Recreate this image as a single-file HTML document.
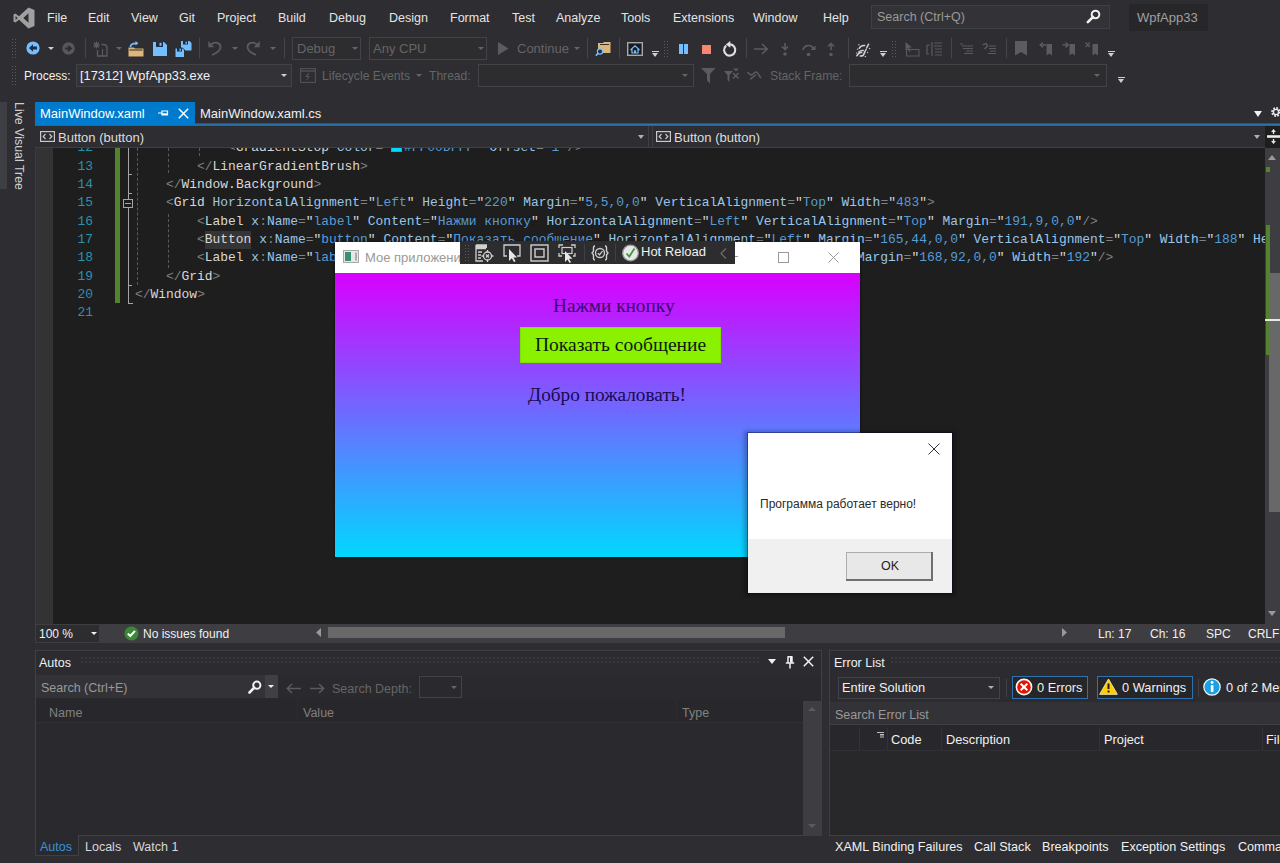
<!DOCTYPE html>
<html><head><meta charset="utf-8">
<style>
*{margin:0;padding:0;box-sizing:border-box}
html,body{width:1280px;height:863px;overflow:hidden;background:#2d2d32;font-family:"Liberation Sans",sans-serif;color:#f1f1f1}
.a{position:absolute}
svg.a{overflow:visible}
.t{position:absolute;white-space:pre;font-size:12px;line-height:14px}
.menu .t{top:11px;color:#e4e4e4;font-size:12.5px}
.dd{position:absolute;width:0;height:0;border-style:solid;border-left:3px solid transparent;border-right:3px solid transparent;border-top:3px solid #d0d0d0;border-bottom:0 solid transparent}
.ddg{border-top-color:#656565}
.sep{position:absolute;width:1px;height:20px;background:#46464a}
.grip{position:absolute;width:5px;background-image:radial-gradient(circle,#5a5a60 0.8px,transparent 1px);background-size:3px 3px}
.cb{position:absolute;border:1px solid #434346;background:#2d2d30}
.code{font-family:"Liberation Mono",monospace;font-size:12.95px;white-space:pre}
.ln{position:absolute;margin-top:2px;white-space:pre;line-height:18px;height:18px;font-family:"Liberation Mono",monospace;font-size:12.95px;color:#dcdcdc}
.num{position:absolute;margin-top:2px;left:53px;width:40px;text-align:right;color:#2b91af;font-family:"Liberation Mono",monospace;font-size:12.95px;line-height:18px}
.p{color:#808080}.e{color:#d8d8d8}.at{color:#9ac6ea}.v{color:#569cd6}.q{color:#d8d8d8}
</style></head><body>

<!-- ============ MENU BAR ============ -->
<svg class="a" style="left:13px;top:7px" width="22" height="22" viewBox="0 0 22 22">
  <path d="M15.5 0.5 L21.5 3 L21.5 19 L15.5 21.5 L6 12.8 L2.4 15.6 L0.5 14.6 L0.5 7.4 L2.4 6.4 L6 9.2 Z M15.5 6.2 L10.3 11 L15.5 15.8 Z M2.6 9 L2.6 13 L4.6 11 Z" fill="#a0a0a0" fill-rule="evenodd"/>
</svg>
<div class="menu">
  <div class="t" style="left:47px">File</div>
  <div class="t" style="left:88px">Edit</div>
  <div class="t" style="left:131px">View</div>
  <div class="t" style="left:179px">Git</div>
  <div class="t" style="left:217px">Project</div>
  <div class="t" style="left:278px">Build</div>
  <div class="t" style="left:329px">Debug</div>
  <div class="t" style="left:389px">Design</div>
  <div class="t" style="left:450px">Format</div>
  <div class="t" style="left:512px">Test</div>
  <div class="t" style="left:556px">Analyze</div>
  <div class="t" style="left:621px">Tools</div>
  <div class="t" style="left:673px">Extensions</div>
  <div class="t" style="left:753px">Window</div>
  <div class="t" style="left:823px">Help</div>
</div>
<div class="a" style="left:871px;top:5px;width:239px;height:24px;background:#333337;border:1px solid #3f3f46"></div>
<div class="t" style="left:877px;top:10px;color:#999;font-size:12.5px">Search (Ctrl+Q)</div>
<svg class="a" style="left:1086px;top:9px" width="15" height="15" viewBox="0 0 15 15">
  <circle cx="9.5" cy="5.5" r="3.8" fill="none" stroke="#f1f1f1" stroke-width="2"/>
  <path d="M7 8 L1.8 13.2" stroke="#f1f1f1" stroke-width="2.6" stroke-linecap="round"/>
</svg>
<div class="a" style="left:1129px;top:4px;width:79px;height:27px;background:#27272a"></div>
<div class="t" style="left:1137px;top:11px;color:#a0a0a0;font-size:13px">WpfApp33</div>

<!-- ============ TOOLBAR 1 ============ -->
<div class="grip" style="left:11px;top:38px;height:22px"></div>
<svg class="a" style="left:26px;top:41px" width="14" height="14" viewBox="0 0 14 14">
  <circle cx="7" cy="7" r="6.6" fill="#75beff"/>
  <path d="M3 7 L7 3.2 L7 5.6 L11 5.6 L11 8.4 L7 8.4 L7 10.8 Z" fill="#1b2e46"/>
</svg>
<div class="dd" style="left:48px;top:47px"></div>
<svg class="a" style="left:62px;top:42px" width="13" height="13" viewBox="0 0 13 13">
  <circle cx="6.5" cy="6.5" r="6.2" fill="#58585b"/>
  <path d="M3 6.5 L8 6.5 M6 3.8 L9 6.5 L6 9.2" fill="none" stroke="#2d2d32" stroke-width="1.8"/>
</svg>
<div class="sep" style="left:85px;top:38px"></div>
<svg class="a" style="left:93px;top:41px" width="16" height="16" viewBox="0 0 16 16">
  <path d="M1 1.5 L6 6.5 M6 1.5 L1 6.5 M3.5 0.5 L3.5 7.5 M0 4 L7 4" stroke="#5c5c5e" stroke-width="1.1"/>
  <path d="M4.5 9 L4.5 15 L14 15 L14 7 C14 4.5 12.5 3.5 10 3.5 L8.5 3.5" fill="none" stroke="#5c5c5e" stroke-width="1.3"/>
  <path d="M9.5 8 L9.5 15" stroke="#5c5c5e" stroke-width="1.1"/>
</svg>
<div class="dd ddg" style="left:116px;top:47px"></div>
<svg class="a" style="left:128px;top:41px" width="17" height="16" viewBox="0 0 17 16">
  <path d="M0.5 6.5 L6 6.5 L7 7.5 L15.5 7.5 L15.5 15.5 L0.5 15.5 Z" fill="#dcb67a"/>
  <path d="M1.5 9 L14.5 9" stroke="#2d2d30" stroke-width="1"/>
  <path d="M2.5 6 C2.5 3 4.5 2.3 8 2.3" fill="none" stroke="#75beff" stroke-width="1.7"/>
  <path d="M7.5 0 L10.5 2.3 L7.5 4.6 Z" fill="#75beff"/>
</svg>
<svg class="a" style="left:153px;top:42px" width="14" height="14" viewBox="0 0 14 14">
  <path d="M0 0 L11 0 L14 3 L14 14 L0 14 Z" fill="#75beff"/>
  <rect x="3" y="0" width="7" height="5" fill="#1b2e46"/>
  <rect x="6.5" y="0.8" width="2" height="3" fill="#75beff"/>
</svg>
<svg class="a" style="left:175px;top:41px" width="17" height="17" viewBox="0 0 17 17">
  <path d="M6 0 L14.5 0 L16.5 2 L16.5 9.5 L6 9.5 Z" fill="#75beff"/>
  <rect x="8" y="0" width="5" height="3.5" fill="#1b2e46"/><rect x="10.5" y="0.6" width="1.4" height="2.2" fill="#75beff"/>
  <path d="M0 7 L7.5 7 L9.5 9 L9.5 16.5 L0 16.5 Z" fill="#75beff" stroke="#2d2d30" stroke-width="1"/>
  <rect x="2" y="7" width="5" height="3.5" fill="#1b2e46"/><rect x="4.5" y="7.6" width="1.4" height="2.2" fill="#75beff"/>
</svg>
<div class="sep" style="left:199px;top:38px"></div>
<svg class="a" style="left:208px;top:40px" width="14" height="16" viewBox="0 0 14 16">
  <path d="M3 4.5 C7 1 12.5 3 12.5 7 C12.5 10 10 12.5 4 15" fill="none" stroke="#5c5c5e" stroke-width="1.8"/>
  <path d="M0.3 1 L0.3 7.3 L6.3 7.3 Z" fill="#5c5c5e"/>
</svg>
<div class="dd ddg" style="left:232px;top:47px"></div>
<svg class="a" style="left:246px;top:40px" width="14" height="16" viewBox="0 0 14 16">
  <path d="M11 4.5 C7 1 1.5 3 1.5 7 C1.5 10 4 12.5 10 15" fill="none" stroke="#5c5c5e" stroke-width="1.8"/>
  <path d="M13.7 1 L13.7 7.3 L7.7 7.3 Z" fill="#5c5c5e"/>
</svg>
<div class="dd ddg" style="left:270px;top:47px"></div>
<div class="sep" style="left:284px;top:38px"></div>
<div class="cb" style="left:292px;top:37px;width:69px;height:23px"></div>
<div class="t" style="left:297px;top:42px;color:#656565;font-size:13px">Debug</div>
<div class="dd ddg" style="left:352px;top:47px"></div>
<div class="cb" style="left:369px;top:37px;width:118px;height:23px"></div>
<div class="t" style="left:373px;top:42px;color:#656565;font-size:13px">Any CPU</div>
<div class="dd ddg" style="left:478px;top:47px"></div>
<svg class="a" style="left:498px;top:42px" width="11" height="13" viewBox="0 0 11 13"><path d="M0 0 L10.5 6.5 L0 13 Z" fill="#5c5c5e"/></svg>
<div class="t" style="left:517px;top:42px;color:#656565;font-size:13px">Continue</div>
<div class="dd ddg" style="left:574px;top:47px"></div>
<div class="sep" style="left:587px;top:38px"></div>
<svg class="a" style="left:595px;top:41px" width="17" height="16" viewBox="0 0 17 16">
  <path d="M3 2 L8 2 L9 1 L15.5 1 L15.5 12 L3 12 Z" fill="#dcb67a"/>
  <path d="M5 3.5 L14 3.5" stroke="#3a3226" stroke-width="1"/>
  <circle cx="5" cy="10.5" r="2.6" fill="#1b2e46" stroke="#75beff" stroke-width="1.2"/>
  <path d="M3.2 12.3 L0.8 14.7" stroke="#75beff" stroke-width="1.8"/>
</svg>
<div class="sep" style="left:619px;top:38px"></div>
<svg class="a" style="left:627px;top:42px" width="16" height="14" viewBox="0 0 16 14">
  <rect x="0.7" y="0.7" width="14.6" height="12.6" fill="#1b1b1e" stroke="#a8a8a8" stroke-width="1.4"/>
  <path d="M3.5 8 L8 3.8 L12.5 8 M5 7 L5 11 L11 11 L11 7" fill="none" stroke="#75beff" stroke-width="1.2"/>
  <rect x="7" y="8.3" width="2" height="2.7" fill="#75beff"/>
</svg>
<div class="a" style="left:652px;top:51px;width:7px;height:1px;background:#d0d0d0"></div>
<div class="dd" style="left:652px;top:53px;border-width:4px 3.5px 0 3.5px"></div>
<div class="grip" style="left:663px;top:40px;height:18px"></div>
<div class="a" style="left:679px;top:44px;width:3.5px;height:9.5px;background:#75beff"></div>
<div class="a" style="left:684px;top:44px;width:3.5px;height:9.5px;background:#75beff"></div>
<div class="a" style="left:702px;top:45px;width:9px;height:8.6px;background:#f48771"></div>
<svg class="a" style="left:722px;top:41px" width="15" height="16" viewBox="0 0 15 16">
  <path d="M4.2 4.6 A5.6 5.6 0 1 0 8 3.4" fill="none" stroke="#e0e0e0" stroke-width="2.1"/>
  <path d="M8.3 0 L8.3 6.8 L3.8 3.4 Z" fill="#e0e0e0"/>
</svg>
<div class="sep" style="left:746px;top:38px"></div>
<svg class="a" style="left:754px;top:43px" width="15" height="12" viewBox="0 0 15 12">
  <path d="M0 6 L13 6 M8 1 L13.2 6 L8 11" fill="none" stroke="#5c5c5e" stroke-width="1.6"/>
</svg>
<svg class="a" style="left:780px;top:43px" width="10" height="14" viewBox="0 0 10 14">
  <path d="M5 0 L5 6 M2 3.5 L5 6.5 L8 3.5" fill="none" stroke="#5c5c5e" stroke-width="1.6"/><circle cx="5" cy="11" r="1.8" fill="#5c5c5e"/>
</svg>
<svg class="a" style="left:801px;top:43px" width="15" height="14" viewBox="0 0 15 14">
  <path d="M2 7 C3 2 10 1 12 5" fill="none" stroke="#5c5c5e" stroke-width="1.7"/><path d="M14.5 2.5 L14.5 7 L9.5 7 Z" fill="#5c5c5e"/><circle cx="7.5" cy="11.5" r="1.8" fill="#5c5c5e"/>
</svg>
<svg class="a" style="left:826px;top:43px" width="10" height="14" viewBox="0 0 10 14">
  <path d="M5 7 L5 1 M2 3.5 L5 0.5 L8 3.5" fill="none" stroke="#5c5c5e" stroke-width="1.6"/><circle cx="5" cy="11.5" r="1.8" fill="#5c5c5e"/>
</svg>
<div class="sep" style="left:848px;top:38px"></div>
<svg class="a" style="left:856px;top:42px" width="15" height="15" viewBox="0 0 15 15">
  <g fill="none" stroke="#d4d4d4" stroke-width="1.5" stroke-linecap="round">
    <path d="M3.2 6.3 C4.5 4 6.5 3.3 8.7 3.5"/>
    <path d="M12.6 2.2 L10.6 6"/>
    <path d="M2.8 10 C4 8.8 5.5 8.2 7.2 8.5"/>
    <path d="M10 7.5 L8.4 10.8"/>
    <path d="M0.8 13.8 C2 11.8 3.8 10.3 5.6 10.6"/>
    <path d="M4.2 14 C6 14.3 7.8 13.2 8.4 11"/>
  </g>
  <g fill="#bdbdbd"><circle cx="2.8" cy="2.8" r="0.8"/><circle cx="1.5" cy="7.3" r="0.7"/><circle cx="0.8" cy="11" r="0.7"/><circle cx="13.6" cy="6.5" r="0.8"/><circle cx="11.6" cy="10.5" r="0.7"/><circle cx="9.4" cy="14.5" r="0.8"/></g>
</svg>
<div class="a" style="left:880px;top:51px;width:7px;height:1px;background:#d0d0d0"></div>
<div class="dd" style="left:880px;top:53px;border-width:4px 3.5px 0 3.5px"></div>
<div class="grip" style="left:891px;top:40px;height:18px"></div>
<svg class="a" style="left:905px;top:42px" width="15" height="15" viewBox="0 0 15 15">
  <path d="M0.5 0 L0.5 8 L2.5 6 L4.5 10 L5.5 9.5 L4 5.5 L7 5.5 Z" fill="#5c5c5e"/>
  <rect x="1.5" y="7.5" width="12.5" height="6.5" fill="none" stroke="#5c5c5e" stroke-width="1"/>
</svg>
<svg class="a" style="left:926px;top:41px" width="17" height="16" viewBox="0 0 17 16">
  <path d="M1 4 L1 13 L3 13 M1 4 L4 4" fill="none" stroke="#5c5c5e" stroke-width="1.2"/>
  <path d="M6 1 L6 15 M8 2 L16 2 M8 5 L16 5 M9 8 L16 8 M9 11 L16 11 M9 14 L16 14" stroke="#5c5c5e" stroke-width="1.2"/>
</svg>
<div class="sep" style="left:951px;top:38px"></div>
<svg class="a" style="left:960px;top:43px" width="14" height="12" viewBox="0 0 14 12">
  <path d="M0 1 L3 1 M2 3 L13 3 M3 5.5 L13 5.5 M6 8 L13 8 M4 10.5 L13 10.5" stroke="#5c5c5e" stroke-width="1.2"/>
</svg>
<svg class="a" style="left:982px;top:43px" width="15" height="12" viewBox="0 0 15 12">
  <path d="M1 2 C3 -0.5 6 1 5 3.5 L2.5 6" fill="none" stroke="#5c5c5e" stroke-width="1.5"/>
  <path d="M7 3 L14 3 M7 5.5 L14 5.5 M8 8 L14 8 M6 10.5 L14 10.5" stroke="#5c5c5e" stroke-width="1.2"/>
</svg>
<div class="sep" style="left:1006px;top:38px"></div>
<svg class="a" style="left:1015px;top:41px" width="12" height="15" viewBox="0 0 12 15"><path d="M0 0 L12 0 L12 14.5 L6 11 L0 14.5 Z" fill="#5c5c5e"/></svg>
<svg class="a" style="left:1039px;top:42px" width="14" height="14" viewBox="0 0 14 14">
  <path d="M7 3 L1.5 3 M4 0.5 L1.2 3 L4 5.5" fill="none" stroke="#5c5c5e" stroke-width="1.4"/>
  <path d="M7.5 2 L13 2 L13 13.5 L10.2 11.5 L7.5 13.5 Z" fill="#5c5c5e"/>
</svg>
<svg class="a" style="left:1062px;top:42px" width="14" height="14" viewBox="0 0 14 14">
  <path d="M0.5 3 L6 3 M3.5 0.5 L6.3 3 L3.5 5.5" fill="none" stroke="#5c5c5e" stroke-width="1.4"/>
  <path d="M7.5 2 L13 2 L13 13.5 L10.2 11.5 L7.5 13.5 Z" fill="#5c5c5e"/>
</svg>
<svg class="a" style="left:1085px;top:42px" width="14" height="14" viewBox="0 0 14 14">
  <path d="M0.5 0.5 L5 5 M5 0.5 L0.5 5" stroke="#5c5c5e" stroke-width="1.3"/>
  <path d="M7.5 2 L13 2 L13 13.5 L10.2 11.5 L7.5 13.5 Z" fill="#5c5c5e"/>
</svg>
<div class="a" style="left:1108px;top:51px;width:7px;height:1px;background:#d0d0d0"></div>
<div class="dd" style="left:1108px;top:53px;border-width:4px 3.5px 0 3.5px"></div>

<!-- ============ TOOLBAR 2 ============ -->
<div class="grip" style="left:11px;top:65px;height:22px"></div>
<div class="t" style="left:24px;top:69px;font-size:12px;color:#f1f1f1">Process:</div>
<div class="cb" style="left:76px;top:64px;width:216px;height:23px;background:#333337"></div>
<div class="t" style="left:80px;top:69px;font-size:12.8px;color:#f1f1f1">[17312] WpfApp33.exe</div>
<div class="dd" style="left:281px;top:74px"></div>
<svg class="a" style="left:300px;top:68px" width="16" height="15" viewBox="0 0 16 15">
  <rect x="0.6" y="0.6" width="14.8" height="13.8" fill="none" stroke="#505052" stroke-width="1.2"/>
  <path d="M0.6 3 L15.4 3" stroke="#505052" stroke-width="1.5"/>
  <path d="M9 5 L6 8.5 L9 8.5 L6.5 12" fill="none" stroke="#505052" stroke-width="1.2"/>
</svg>
<div class="t" style="left:322px;top:69px;color:#656565;font-size:12.2px">Lifecycle Events</div>
<div class="dd ddg" style="left:416px;top:74px"></div>
<div class="t" style="left:429px;top:69px;color:#656565;font-size:12.1px">Thread:</div>
<div class="cb" style="left:478px;top:64px;width:216px;height:23px"></div>
<div class="dd ddg" style="left:682px;top:74px"></div>
<svg class="a" style="left:701px;top:68px" width="15" height="16" viewBox="0 0 15 16"><path d="M0 0 L14.5 0 L9 6 L9 15.5 L6 12.5 L6 6 Z" fill="#5c5c5e"/></svg>
<svg class="a" style="left:724px;top:68px" width="16" height="16" viewBox="0 0 16 16">
  <path d="M0 3 L9 3 L5.5 7 L5.5 14 L3.5 12 L3.5 7 Z" fill="#5c5c5e"/>
  <path d="M9 0.5 L15 0.5 L12 3.5 Z" fill="#5c5c5e"/><path d="M9 5 L14.5 10.5 M14.5 5 L9 10.5" stroke="#5c5c5e" stroke-width="1.5"/>
</svg>
<svg class="a" style="left:747px;top:70px" width="15" height="11" viewBox="0 0 15 11">
  <path d="M0.5 2 L3 4.5 C5 6.5 7 2 9 2 C11 2 12 6 14 8 M3 9 C5 9 7 5 9 5" fill="none" stroke="#5c5c5e" stroke-width="1.6"/>
</svg>
<div class="t" style="left:770px;top:69px;color:#656565;font-size:12.2px">Stack Frame:</div>
<div class="cb" style="left:849px;top:64px;width:258px;height:23px"></div>
<div class="dd ddg" style="left:1094px;top:74px"></div>
<div class="a" style="left:1118px;top:77px;width:7px;height:1px;background:#d0d0d0"></div>
<div class="dd" style="left:1118px;top:79px;border-width:4px 3.5px 0 3.5px"></div>

<!-- ============ DOC TABS ============ -->
<div class="a" style="left:0;top:102px;width:7px;height:87px;background:#3e3e45"></div>
<div class="t" style="left:24.5px;top:102px;font-size:12.4px;line-height:12px;color:#d0d0d0;transform-origin:0 0;transform:rotate(90deg)">Live Visual Tree</div>
<div class="a" style="left:35px;top:102px;width:160px;height:22px;background:#007acc"></div>
<div class="t" style="left:40px;top:107px;font-size:13px;color:#fff">MainWindow.xaml</div>
<svg class="a" style="left:158px;top:108px" width="10" height="10" viewBox="0 0 10 10">
  <path d="M0 5 L4 5 M4 2.5 L4 7.5 M4 3 L9.5 3 L9.5 7 L4 7" fill="none" stroke="#fff" stroke-width="1.2"/>
  <rect x="4" y="5.3" width="5.5" height="1.7" fill="#fff"/>
</svg>
<svg class="a" style="left:178px;top:108px" width="11" height="11" viewBox="0 0 11 11">
  <path d="M0.8 0.8 L10.2 10.2 M10.2 0.8 L0.8 10.2" stroke="#fff" stroke-width="1.5"/>
</svg>
<div class="t" style="left:200px;top:107px;font-size:13px;color:#f1f1f1">MainWindow.xaml.cs</div>
<div class="a" style="left:35px;top:123px;width:1245px;height:3px;background:linear-gradient(#1c4466,#2a74ac 45%,#2a74ac 75%,#224f72)"></div>
<div class="a" style="left:35px;top:123px;width:160px;height:2px;background:#007acc"></div>
<div class="dd" style="left:1254px;top:111px;border-width:6px 4.5px 0 4.5px;border-top-color:#f1f1f1"></div>
<svg class="a" style="left:1270px;top:106px" width="12" height="12" viewBox="0 0 12 12">
  <circle cx="6" cy="6" r="3.6" fill="none" stroke="#e8e8e8" stroke-width="2.6" stroke-dasharray="1.6 1.2"/>
  <circle cx="6" cy="6" r="2.6" fill="none" stroke="#e8e8e8" stroke-width="1.4"/>
</svg>

<!-- ============ NAV BAR ============ -->
<div class="a" style="left:35px;top:126px;width:1230px;height:22px;background:#2e2e32;border-bottom:1px solid #3f3f46"></div>
<div class="a" style="left:648px;top:126px;width:1px;height:21px;background:#3f3f46"></div>
<div class="a" style="left:652px;top:126px;width:1px;height:21px;background:#3f3f46"></div>
<svg class="a" style="left:40px;top:131px" width="15" height="11" viewBox="0 0 15 11">
  <rect x="0.6" y="0.6" width="13.8" height="9.8" fill="none" stroke="#c8c8c8" stroke-width="1.2"/>
  <path d="M5.5 3 L3.2 5.5 L5.5 8 M9.5 3 L11.8 5.5 L9.5 8" fill="none" stroke="#c8c8c8" stroke-width="1.2"/>
</svg>
<div class="t" style="left:58px;top:131px;font-size:13px;color:#dcdcdc">Button (button)</div>
<div class="dd" style="left:638px;top:135px;border-width:4px 3px 0 3px;border-top-color:#b0b0b0"></div>
<svg class="a" style="left:656px;top:131px" width="15" height="11" viewBox="0 0 15 11">
  <rect x="0.6" y="0.6" width="13.8" height="9.8" fill="none" stroke="#c8c8c8" stroke-width="1.2"/>
  <path d="M5.5 3 L3.2 5.5 L5.5 8 M9.5 3 L11.8 5.5 L9.5 8" fill="none" stroke="#c8c8c8" stroke-width="1.2"/>
</svg>
<div class="t" style="left:674px;top:131px;font-size:13px;color:#dcdcdc">Button (button)</div>
<div class="dd" style="left:1254px;top:135px;border-width:4px 3px 0 3px;border-top-color:#b0b0b0"></div>
<div class="a" style="left:1265px;top:126px;width:15px;height:22px;background:#1e1e1e"></div>
<svg class="a" style="left:1267px;top:129px" width="13" height="15" viewBox="0 0 13 15">
  <path d="M0 7.5 L13 7.5" stroke="#e8e8e8" stroke-width="2.6"/>
  <path d="M6.5 0.5 L6.5 5 M6.5 10 L6.5 14.5" stroke="#e8e8e8" stroke-width="1.3"/>
  <path d="M4 3 L6.5 0.3 L9 3 Z M4 12 L6.5 14.7 L9 12 Z" fill="#e8e8e8"/>
</svg>

<!-- ============ EDITOR ============ -->
<div class="a" style="left:35px;top:148px;width:1230px;height:476px;background:#1e1e1e;overflow:hidden">
</div>
<div class="a" style="left:35px;top:148px;width:18px;height:476px;background:#333334"></div>
<div class="a" style="left:35px;top:148px;width:1px;height:476px;background:#3c3c40"></div>
<!-- line numbers -->
<div class="a" style="left:0;top:148px;width:1265px;height:476px;overflow:hidden">
 <div class="a" style="left:0;top:-148px;width:1265px;height:700px">
  <div class="num" style="top:137px">12</div>
  <div class="num" style="top:156px">13</div>
  <div class="num" style="top:174px">14</div>
  <div class="num" style="top:192px">15</div>
  <div class="num" style="top:211px">16</div>
  <div class="num" style="top:229px">17</div>
  <div class="num" style="top:247px">18</div>
  <div class="num" style="top:266px">19</div>
  <div class="num" style="top:284px">20</div>
  <div class="num" style="top:302px">21</div>
  <!-- change margin -->
  <div class="a" style="left:115px;top:148px;width:5px;height:155px;background:#55822f"></div>
  <!-- outlining -->
  <div class="a" style="left:128px;top:148px;width:1px;height:51px;background:#a5a5a5"></div>
  <div class="a" style="left:128px;top:174px;width:4px;height:1px;background:#a5a5a5"></div>
  <div class="a" style="left:128px;top:193px;width:4px;height:1px;background:#a5a5a5"></div>
  <div class="a" style="left:123px;top:199px;width:10px;height:9px;border:1px solid #a5a5a5"></div>
  <div class="a" style="left:125px;top:203px;width:6px;height:1px;background:#a5a5a5"></div>
  <div class="a" style="left:128px;top:208px;width:1px;height:96px;background:#a5a5a5"></div>
  <div class="a" style="left:128px;top:285px;width:4px;height:1px;background:#a5a5a5"></div>
  <div class="a" style="left:128px;top:303px;width:5px;height:1px;background:#a5a5a5"></div>
  <!-- indent guides -->
  <div class="a" style="left:137px;top:148px;width:1px;height:137px;border-left:1px dashed #5a5a5a"></div>
  <div class="a" style="left:168px;top:148px;width:1px;height:25px;border-left:1px dashed #5a5a5a"></div>
  <div class="a" style="left:168px;top:214px;width:1px;height:54px;border-left:1px dashed #5a5a5a"></div>
  <div class="a" style="left:199px;top:148px;width:1px;height:8px;border-left:1px dashed #5a5a5a"></div>
  <!-- code lines -->
  <div class="ln" style="left:228px;top:137px"><span class="p">&lt;</span><span class="e">GradientStop</span> <span class="at">Color</span><span class="p">=</span><span class="q">"</span><span style="display:inline-block;width:11px;height:9px;background:#00d8ff;border:1px solid #888;vertical-align:-1px;margin-right:2px"></span><span class="v">#FF00DFFF</span><span class="q">"</span> <span class="at">Offset</span><span class="p">=</span><span class="q">"</span><span class="v">1</span><span class="q">"</span><span class="p">/&gt;</span></div>
  <div class="ln" style="left:197px;top:156px"><span class="p">&lt;/</span><span class="e">LinearGradientBrush</span><span class="p">&gt;</span></div>
  <div class="ln" style="left:166px;top:174px"><span class="p">&lt;/</span><span class="e">Window.Background</span><span class="p">&gt;</span></div>
  <div class="ln" style="left:166px;top:192px"><span class="p">&lt;</span><span class="e">Grid</span> <span class="at">HorizontalAlignment</span><span class="p">=</span><span class="q">"</span><span class="v">Left</span><span class="q">"</span> <span class="at">Height</span><span class="p">=</span><span class="q">"</span><span class="v">220</span><span class="q">"</span> <span class="at">Margin</span><span class="p">=</span><span class="q">"</span><span class="v">5,5,0,0</span><span class="q">"</span> <span class="at">VerticalAlignment</span><span class="p">=</span><span class="q">"</span><span class="v">Top</span><span class="q">"</span> <span class="at">Width</span><span class="p">=</span><span class="q">"</span><span class="v">483</span><span class="q">"</span><span class="p">&gt;</span></div>
  <div class="ln" style="left:197px;top:211px"><span class="p">&lt;</span><span class="e">Label</span> <span class="at">x</span><span class="p">:</span><span class="at">Name</span><span class="p">=</span><span class="q">"</span><span class="v">label</span><span class="q">"</span> <span class="at">Content</span><span class="p">=</span><span class="q">"</span><span class="v">Нажми кнопку</span><span class="q">"</span> <span class="at">HorizontalAlignment</span><span class="p">=</span><span class="q">"</span><span class="v">Left</span><span class="q">"</span> <span class="at">VerticalAlignment</span><span class="p">=</span><span class="q">"</span><span class="v">Top</span><span class="q">"</span> <span class="at">Margin</span><span class="p">=</span><span class="q">"</span><span class="v">191,9,0,0</span><span class="q">"</span><span class="p">/&gt;</span></div>
  <div class="ln" style="left:197px;top:229px"><span class="p">&lt;</span><span class="e" style="background:#353535;display:inline-block;height:18px;vertical-align:top">Button</span> <span class="at">x</span><span class="p">:</span><span class="at">Name</span><span class="p">=</span><span class="q">"</span><span class="v">button</span><span class="q">"</span> <span class="at">Content</span><span class="p">=</span><span class="q">"</span><span class="v">Показать сообщение</span><span class="q">"</span> <span class="at">HorizontalAlignment</span><span class="p">=</span><span class="q">"</span><span class="v">Left</span><span class="q">"</span> <span class="at">Margin</span><span class="p">=</span><span class="q">"</span><span class="v">165,44,0,0</span><span class="q">"</span> <span class="at">VerticalAlignment</span><span class="p">=</span><span class="q">"</span><span class="v">Top</span><span class="q">"</span> <span class="at">Width</span><span class="p">=</span><span class="q">"</span><span class="v">188</span><span class="q">"</span> <span class="at">Height</span><span class="p">=</span><span class="q">"</span><span class="v">36</span><span class="q">"</span></div>
  <div class="ln" style="left:197px;top:247px"><span class="p">&lt;</span><span class="e">Label</span> <span class="at">x</span><span class="p">:</span><span class="at">Name</span><span class="p">=</span><span class="q">"</span><span class="v">label1</span><span class="q">"</span> <span class="at">Content</span><span class="p">=</span><span class="q">"</span><span class="v">Добро пожаловать!</span><span class="q">"</span> <span class="at">HorizontalAlignment</span><span class="p">=</span><span class="q">"</span><span class="v">Left</span><span class="q">"</span> <span class="at">Tag</span><span class="p">=</span><span class="q">"</span><span class="q">"</span> <span class="at">Margin</span><span class="p">=</span><span class="q">"</span><span class="v">168,92,0,0</span><span class="q">"</span> <span class="at">Width</span><span class="p">=</span><span class="q">"</span><span class="v">192</span><span class="q">"</span><span class="p">/&gt;</span></div>
  <div class="ln" style="left:166px;top:266px"><span class="p">&lt;/</span><span class="e">Grid</span><span class="p">&gt;</span></div>
  <div class="ln" style="left:135px;top:284px"><span class="p">&lt;/</span><span class="e">Window</span><span class="p">&gt;</span></div>
 </div>
</div>

<!-- editor vertical scrollbar -->
<div class="a" style="left:1265px;top:148px;width:15px;height:476px;background:#3e3e42"></div>
<div class="dd" style="left:1268px;top:155px;border-width:0 4.5px 5px 4.5px;border-color:transparent transparent #999 transparent"></div>
<div class="a" style="left:1269px;top:273px;width:11px;height:239px;background:#686868"></div>
<div class="a" style="left:1266px;top:167px;width:4px;height:5px;background:#55822f"></div>
<div class="a" style="left:1266px;top:225px;width:4px;height:130px;background:#55822f"></div>
<div class="a" style="left:1265px;top:319px;width:15px;height:2px;background:#e8e8e8"></div>
<div class="dd" style="left:1268px;top:611px;border-width:5px 4.5px 0 4.5px;border-top-color:#999"></div>

<!-- ============ EDITOR STATUS BAR ============ -->
<div class="a" style="left:35px;top:624px;width:1245px;height:19px;background:#3e3e42"></div>
<div class="a" style="left:36px;top:625px;width:63px;height:17px;background:#2d2d30"></div>
<div class="t" style="left:39px;top:627px;font-size:12px;color:#f1f1f1">100 %</div>
<div class="dd" style="left:91px;top:632px;border-top-color:#f1f1f1"></div>
<svg class="a" style="left:124px;top:626px" width="15" height="15" viewBox="0 0 15 15">
  <circle cx="7.5" cy="7.5" r="7" fill="#388a34"/>
  <path d="M3.8 7.6 L6.3 10 L11 4.8" fill="none" stroke="#fff" stroke-width="2"/>
</svg>
<div class="t" style="left:143px;top:627px;font-size:12px;color:#f1f1f1">No issues found</div>
<svg class="a" style="left:316px;top:628px" width="5" height="9" viewBox="0 0 5 9"><path d="M5 0 L0 4.5 L5 9 Z" fill="#999"/></svg>
<div class="a" style="left:328px;top:627px;width:457px;height:11px;background:#686868"></div>
<svg class="a" style="left:1062px;top:628px" width="5" height="9" viewBox="0 0 5 9"><path d="M0 0 L5 4.5 L0 9 Z" fill="#999"/></svg>
<div class="t" style="left:1098px;top:627px;font-size:12px;color:#f1f1f1">Ln: 17</div>
<div class="t" style="left:1150px;top:627px;font-size:12px;color:#f1f1f1">Ch: 16</div>
<div class="t" style="left:1206px;top:627px;font-size:12px;color:#f1f1f1">SPC</div>
<div class="t" style="left:1248px;top:627px;font-size:12px;color:#f1f1f1">CRLF</div>

<!-- ============ AUTOS PANEL ============ -->
<div class="a" style="left:35px;top:650px;width:787px;height:186px;background:#2a2a2e;border:1px solid #3f3f46"></div>
<div class="a" style="left:36px;top:651px;width:785px;height:24px;background:#2b2b30"></div>
<div class="a" style="left:80px;top:656px;width:680px;height:9px;background-image:radial-gradient(circle,#38383e 0.7px,transparent 0.9px);background-size:4px 4px"></div>
<div class="t" style="left:39px;top:656px;font-size:12.5px;color:#f1f1f1">Autos</div>
<div class="dd" style="left:768px;top:659px;border-width:5px 4px 0 4px;border-top-color:#f1f1f1"></div>
<svg class="a" style="left:785px;top:656px" width="10" height="13" viewBox="0 0 10 13">
  <path d="M2.5 0.8 L7.5 0.8 M3 0.8 L3 6.5 M7 0.8 L7 6.5 M0.8 7 L9.2 7 M5 7 L5 12.5" stroke="#f1f1f1" stroke-width="1.5" fill="none"/>
  <rect x="5" y="1" width="2" height="5.5" fill="#f1f1f1"/>
</svg>
<svg class="a" style="left:803px;top:656px" width="11" height="11" viewBox="0 0 11 11"><path d="M0.8 0.8 L10.2 10.2 M10.2 0.8 L0.8 10.2" stroke="#f1f1f1" stroke-width="1.5"/></svg>
<!-- search -->
<div class="a" style="left:36px;top:675px;width:229px;height:23px;background:#333337"></div>
<div class="t" style="left:41px;top:681px;font-size:12.5px;color:#999">Search (Ctrl+E)</div>
<svg class="a" style="left:248px;top:680px" width="14" height="14" viewBox="0 0 14 14">
  <circle cx="8.8" cy="5.2" r="3.6" fill="none" stroke="#f1f1f1" stroke-width="2"/>
  <path d="M6.3 7.7 L1.5 12.5" stroke="#f1f1f1" stroke-width="2.6" stroke-linecap="round"/>
</svg>
<div class="a" style="left:265px;top:675px;width:13px;height:23px;background:#3f3f46"></div>
<div class="dd" style="left:268px;top:685px;border-top-color:#f1f1f1"></div>
<svg class="a" style="left:286px;top:683px" width="16" height="11" viewBox="0 0 16 11"><path d="M15 5.5 L1.5 5.5 M6 1 L1.3 5.5 L6 10" fill="none" stroke="#5a5a5c" stroke-width="1.6"/></svg>
<svg class="a" style="left:309px;top:683px" width="16" height="11" viewBox="0 0 16 11"><path d="M1 5.5 L14.5 5.5 M10 1 L14.7 5.5 L10 10" fill="none" stroke="#5a5a5c" stroke-width="1.6"/></svg>
<div class="t" style="left:332px;top:682px;font-size:12.5px;color:#656565">Search Depth:</div>
<div class="cb" style="left:419px;top:676px;width:43px;height:22px;background:transparent"></div>
<div class="dd ddg" style="left:451px;top:686px"></div>
<!-- header -->
<div class="a" style="left:36px;top:699px;width:767px;height:24px;background:#28282c;border-bottom:1px solid #313135"></div>
<div class="t" style="left:49px;top:706px;font-size:12.5px;color:#808080">Name</div>
<div class="a" style="left:297px;top:700px;width:1px;height:23px;background:#2d2d30"></div>
<div class="t" style="left:303px;top:706px;font-size:12.5px;color:#808080">Value</div>
<div class="a" style="left:676px;top:700px;width:1px;height:23px;background:#2d2d30"></div>
<div class="t" style="left:682px;top:706px;font-size:12.5px;color:#808080">Type</div>
<!-- scrollbar -->
<div class="a" style="left:803px;top:701px;width:18px;height:135px;background:#3e3e42"></div>
<div class="dd" style="left:808px;top:707px;border-width:0 4px 4px 4px;border-color:transparent transparent #5a5a5e transparent"></div>
<div class="dd" style="left:808px;top:824px;border-width:4px 4px 0 4px;border-top-color:#5a5a5e"></div>
<!-- bottom tabs -->
<div class="a" style="left:35px;top:835px;width:44px;height:21px;background:#2a2a2e;border:1px solid #3f3f46;border-top:none"></div>
<div class="t" style="left:40px;top:840px;font-size:12.5px;color:#3591dc">Autos</div>
<div class="t" style="left:85px;top:840px;font-size:12.5px;color:#d8d8d8">Locals</div>
<div class="t" style="left:133px;top:840px;font-size:12.5px;color:#d8d8d8">Watch 1</div>

<!-- ============ ERROR LIST ============ -->
<div class="a" style="left:829px;top:650px;width:460px;height:186px;background:#28282b;border:1px solid #3f3f46"></div>
<div class="a" style="left:830px;top:651px;width:450px;height:24px;background:#2b2b30"></div>
<div class="a" style="left:890px;top:656px;width:390px;height:9px;background-image:radial-gradient(circle,#38383e 0.7px,transparent 0.9px);background-size:4px 4px"></div>
<div class="t" style="left:834px;top:656px;font-size:12.5px;color:#f1f1f1">Error List</div>
<div class="a" style="left:830px;top:675px;width:450px;height:27px;background:#2b2b30"></div>
<div class="cb" style="left:838px;top:677px;width:162px;height:22px;background:#2d2d31"></div>
<div class="t" style="left:842px;top:681px;font-size:12.8px;color:#f1f1f1">Entire Solution</div>
<div class="dd" style="left:988px;top:686px;border-top-color:#b0b0b0"></div>
<div class="a" style="left:1006px;top:679px;width:1px;height:18px;background:#3f3f46"></div>
<div class="a" style="left:1012px;top:676px;width:76px;height:23px;border:1px solid #2f72ae;background:#262629"></div>
<svg class="a" style="left:1015px;top:678px" width="18" height="18" viewBox="0 0 18 18">
  <circle cx="9" cy="9" r="7.6" fill="#e51400" stroke="#f4f4f4" stroke-width="1.6"/>
  <path d="M5.7 5.7 L12.3 12.3 M12.3 5.7 L5.7 12.3" stroke="#fff" stroke-width="2"/>
</svg>
<div class="t" style="left:1037px;top:681px;font-size:12.8px;color:#f1f1f1">0 Errors</div>
<div class="a" style="left:1097px;top:676px;width:96px;height:23px;border:1px solid #2f72ae;background:#262629"></div>
<svg class="a" style="left:1099px;top:678px" width="19" height="17" viewBox="0 0 19 17">
  <path d="M9.5 1 L18.3 16.3 L0.7 16.3 Z" fill="#ffcc00" stroke="#f0e0a0" stroke-width="1" stroke-linejoin="round"/>
  <path d="M9.5 5.5 L9.5 11" stroke="#1e1e1e" stroke-width="2"/><rect x="8.5" y="12.5" width="2" height="2" fill="#1e1e1e"/>
</svg>
<div class="t" style="left:1122px;top:681px;font-size:12.8px;color:#f1f1f1">0 Warnings</div>
<div class="a" style="left:1198px;top:679px;width:1px;height:18px;background:#3f3f46"></div>
<svg class="a" style="left:1203px;top:678px" width="18" height="18" viewBox="0 0 18 18">
  <circle cx="9" cy="9" r="8.2" fill="#1ba1e2" stroke="#f4f4f4" stroke-width="1.2"/>
  <rect x="7.8" y="7" width="2.6" height="7" fill="#fff"/><circle cx="9.1" cy="4.4" r="1.4" fill="#fff"/>
</svg>
<div class="t" style="left:1226px;top:681px;font-size:12.8px;color:#f1f1f1">0 of 2 Messages</div>
<!-- search error list -->
<div class="a" style="left:830px;top:702px;width:450px;height:23px;background:#333337;border-bottom:1px solid #3f3f46"></div>
<div class="t" style="left:835px;top:708px;font-size:12.5px;color:#999">Search Error List</div>
<!-- header -->
<div class="a" style="left:830px;top:725px;width:450px;height:26px;background:#28282c;border-bottom:1px solid #313135"></div>
<div class="a" style="left:859px;top:727px;width:1px;height:23px;background:#333337"></div>
<div class="a" style="left:887px;top:727px;width:1px;height:23px;background:#333337"></div>
<div class="a" style="left:941px;top:727px;width:1px;height:23px;background:#333337"></div>
<div class="a" style="left:1099px;top:727px;width:1px;height:23px;background:#333337"></div>
<div class="a" style="left:1262px;top:727px;width:1px;height:23px;background:#333337"></div>
<svg class="a" style="left:877px;top:732px" width="7" height="6" viewBox="0 0 7 6"><path d="M0 0.5 L7 0.5 M3 2.5 L7 2.5 M4 2 L4 6 M6 2 L6 6" stroke="#c0c0c0" stroke-width="1"/></svg>
<div class="t" style="left:891px;top:733px;font-size:12.8px;color:#f1f1f1">Code</div>
<div class="t" style="left:946px;top:733px;font-size:12.8px;color:#f1f1f1">Description</div>
<div class="t" style="left:1104px;top:733px;font-size:12.8px;color:#f1f1f1">Project</div>
<div class="t" style="left:1266px;top:733px;font-size:12.8px;color:#f1f1f1">File</div>
<!-- bottom tabs -->
<div class="t" style="left:835px;top:840px;font-size:12.6px;color:#f1f1f1">XAML Binding Failures</div>
<div class="t" style="left:974px;top:840px;font-size:12.6px;color:#f1f1f1">Call Stack</div>
<div class="t" style="left:1042px;top:840px;font-size:12.6px;color:#f1f1f1">Breakpoints</div>
<div class="t" style="left:1121px;top:840px;font-size:12.6px;color:#f1f1f1">Exception Settings</div>
<div class="t" style="left:1238px;top:840px;font-size:12.6px;color:#f1f1f1">Command Window</div>

<!-- ============ WPF WINDOW ============ -->
<div class="a" style="left:334px;top:241px;width:527px;height:317px;background:rgba(0,0,0,0.35);filter:blur(1px)"></div>
<div class="a" style="left:335px;top:242px;width:525px;height:315px;background:#fff"></div>
<div class="a" style="left:335px;top:273px;width:525px;height:284px;background:linear-gradient(#d800ff,#00d8ff)"></div>
<svg class="a" style="left:343px;top:250px" width="16" height="13" viewBox="0 0 16 13">
  <rect x="0.5" y="0.5" width="15" height="12" fill="#e8e8e8" stroke="#a8a8a8" stroke-width="1"/>
  <rect x="2" y="2" width="6" height="9" fill="#3b8f78"/>
  <path d="M13 2.5 L13 10.5" stroke="#707070" stroke-width="1"/>
</svg>
<div class="t" style="left:365px;top:251px;font-size:13px;color:#999">Мое приложение</div>
<div class="a" style="left:778px;top:252px;width:11px;height:11px;border:1px solid #999"></div>
<svg class="a" style="left:828px;top:252px" width="11" height="11" viewBox="0 0 11 11"><path d="M0.5 0.5 L10.5 10.5 M10.5 0.5 L0.5 10.5" stroke="#999" stroke-width="1"/></svg>
<div class="a" style="left:734px;top:256px;width:4px;height:1px;background:#999"></div>
<!-- hot reload toolbar -->
<div class="a" style="left:460px;top:241px;width:275px;height:23px;background:#2d2d30"></div>
<div class="grip" style="left:464px;top:244px;height:17px"></div>
<svg class="a" style="left:475px;top:244px" width="19" height="18" viewBox="0 0 19 18">
  <path d="M1 1 L12 1 M1 1 L1 17 L8 17 M1 4.5 L11 4.5 M3 8 L7 8 M3 11 L6 11 M3 14 L6 14" fill="none" stroke="#d0d0d0" stroke-width="1.3"/>
  <rect x="1" y="1" width="11" height="3" fill="#d0d0d0"/>
  <circle cx="12.5" cy="12" r="4" fill="none" stroke="#d0d0d0" stroke-width="1.3"/>
  <path d="M12.5 6 L12.5 8.5 M12.5 15.5 L12.5 18 M6.5 12 L9 12 M16 12 L18.5 12 M11 10.5 L14 13.5 M14 10.5 L11 13.5" stroke="#d0d0d0" stroke-width="1.3"/>
</svg>
<svg class="a" style="left:503px;top:244px" width="19" height="18" viewBox="0 0 19 18">
  <path d="M4 12 L1 12 L1 1 L17 1 L17 12 L14 12" fill="none" stroke="#d0d0d0" stroke-width="1.3"/>
  <path d="M6 5 L6 17 L8.8 14.2 L11 18 L12.6 17.2 L10.4 13.4 L14 13.4 Z" fill="#e6e6e6"/>
</svg>
<svg class="a" style="left:530px;top:244px" width="19" height="18" viewBox="0 0 19 18">
  <rect x="1" y="1" width="17" height="16" fill="none" stroke="#d0d0d0" stroke-width="1.4"/>
  <rect x="5" y="5" width="9" height="8" fill="none" stroke="#d0d0d0" stroke-width="1.4"/>
</svg>
<svg class="a" style="left:558px;top:244px" width="19" height="18" viewBox="0 0 19 18">
  <path d="M1 4 L1 1 L5 1 M13 1 L17 1 L17 4 M1 9 L1 12 L4 12 M17 9 L17 12 L15 12" fill="none" stroke="#d0d0d0" stroke-width="1.3"/>
  <rect x="4" y="3.5" width="10" height="6" fill="none" stroke="#d0d0d0" stroke-width="1.2"/>
  <path d="M7 7 L7 18 L9.5 15.5 L11.5 19 L13 18.2 L11 14.7 L14.5 14.7 Z" fill="#e6e6e6"/>
</svg>
<div class="a" style="left:584px;top:244px;width:1px;height:17px;background:#3f3f46"></div>
<svg class="a" style="left:591px;top:245px" width="18" height="16" viewBox="0 0 18 16">
  <path d="M4 1 C2 1 2.5 3 2.5 5.5 C2.5 7 1 8 0.5 8 C1 8 2.5 9 2.5 10.5 C2.5 13 2 15 4 15 M14 1 C16 1 15.5 3 15.5 5.5 C15.5 7 17 8 17.5 8 C17 8 15.5 9 15.5 10.5 C15.5 13 16 15 14 15" fill="none" stroke="#d0d0d0" stroke-width="1.4"/>
  <circle cx="9" cy="8" r="4.5" fill="none" stroke="#d0d0d0" stroke-width="1.3"/>
  <path d="M6.8 8.2 L8.5 9.8 L11.5 6.2" fill="none" stroke="#d0d0d0" stroke-width="1.3"/>
</svg>
<div class="a" style="left:615px;top:244px;width:1px;height:17px;background:#3f3f46"></div>
<svg class="a" style="left:622px;top:244px" width="17" height="18" viewBox="0 0 17 18">
  <circle cx="8.5" cy="9" r="7.8" fill="#e8e8e8" stroke="#9a9a9a" stroke-width="1.2"/>
  <path d="M4.5 9.5 L7.3 12.5 L12.5 4.5" fill="none" stroke="#3a9a3a" stroke-width="1.8"/>
</svg>
<div class="t" style="left:641px;top:245px;font-size:13px;color:#f1f1f1">Hot Reload</div>
<svg class="a" style="left:720px;top:248px" width="7" height="11" viewBox="0 0 7 11"><path d="M6 0.5 L1 5.5 L6 10.5" fill="none" stroke="#6a6a6a" stroke-width="1.3"/></svg>
<!-- WPF content -->
<div class="t" style="left:553px;top:295px;font-family:'Liberation Serif',serif;font-size:19.3px;line-height:22px;color:#3a0a6a">Нажми кнопку</div>
<div class="a" style="left:520px;top:327px;width:201px;height:36px;background:#8af200;border:1px solid #80e000"></div>
<div class="t" style="left:535px;top:334px;font-family:'Liberation Serif',serif;font-size:19.5px;line-height:22px;color:#0a1a0a">Показать сообщение</div>
<div class="t" style="left:528px;top:384px;font-family:'Liberation Serif',serif;font-size:19.3px;line-height:22px;color:#1a0a50">Добро пожаловать!</div>

<!-- ============ MESSAGE BOX ============ -->
<div class="a" style="left:744px;top:431px;width:212px;height:166px;background:rgba(0,0,0,0.25);filter:blur(2px)"></div>
<div class="a" style="left:747px;top:432px;width:206px;height:162px;background:rgba(0,0,40,0.35)"></div>
<div class="a" style="left:748px;top:433px;width:204px;height:160px;background:#fff"></div>
<div class="a" style="left:748px;top:539px;width:204px;height:54px;background:#f0f0f0"></div>
<svg class="a" style="left:928px;top:443px" width="12" height="12" viewBox="0 0 12 12"><path d="M0.5 0.5 L11.5 11.5 M11.5 0.5 L0.5 11.5" stroke="#333" stroke-width="1"/></svg>
<div class="t" style="left:760px;top:497px;font-size:12px;color:#2a2a2a">Программа работает верно!</div>
<div class="a" style="left:846px;top:552px;width:87px;height:29px;background:#e8e8e8;border:1px solid #adadad"></div>
<div class="a" style="left:846px;top:552px;width:87px;height:29px;border-right:2px solid #6f6f6f;border-bottom:2px solid #6f6f6f"></div>
<div class="t" style="left:881px;top:559px;font-size:12.5px;color:#222">OK</div>



</body></html>
